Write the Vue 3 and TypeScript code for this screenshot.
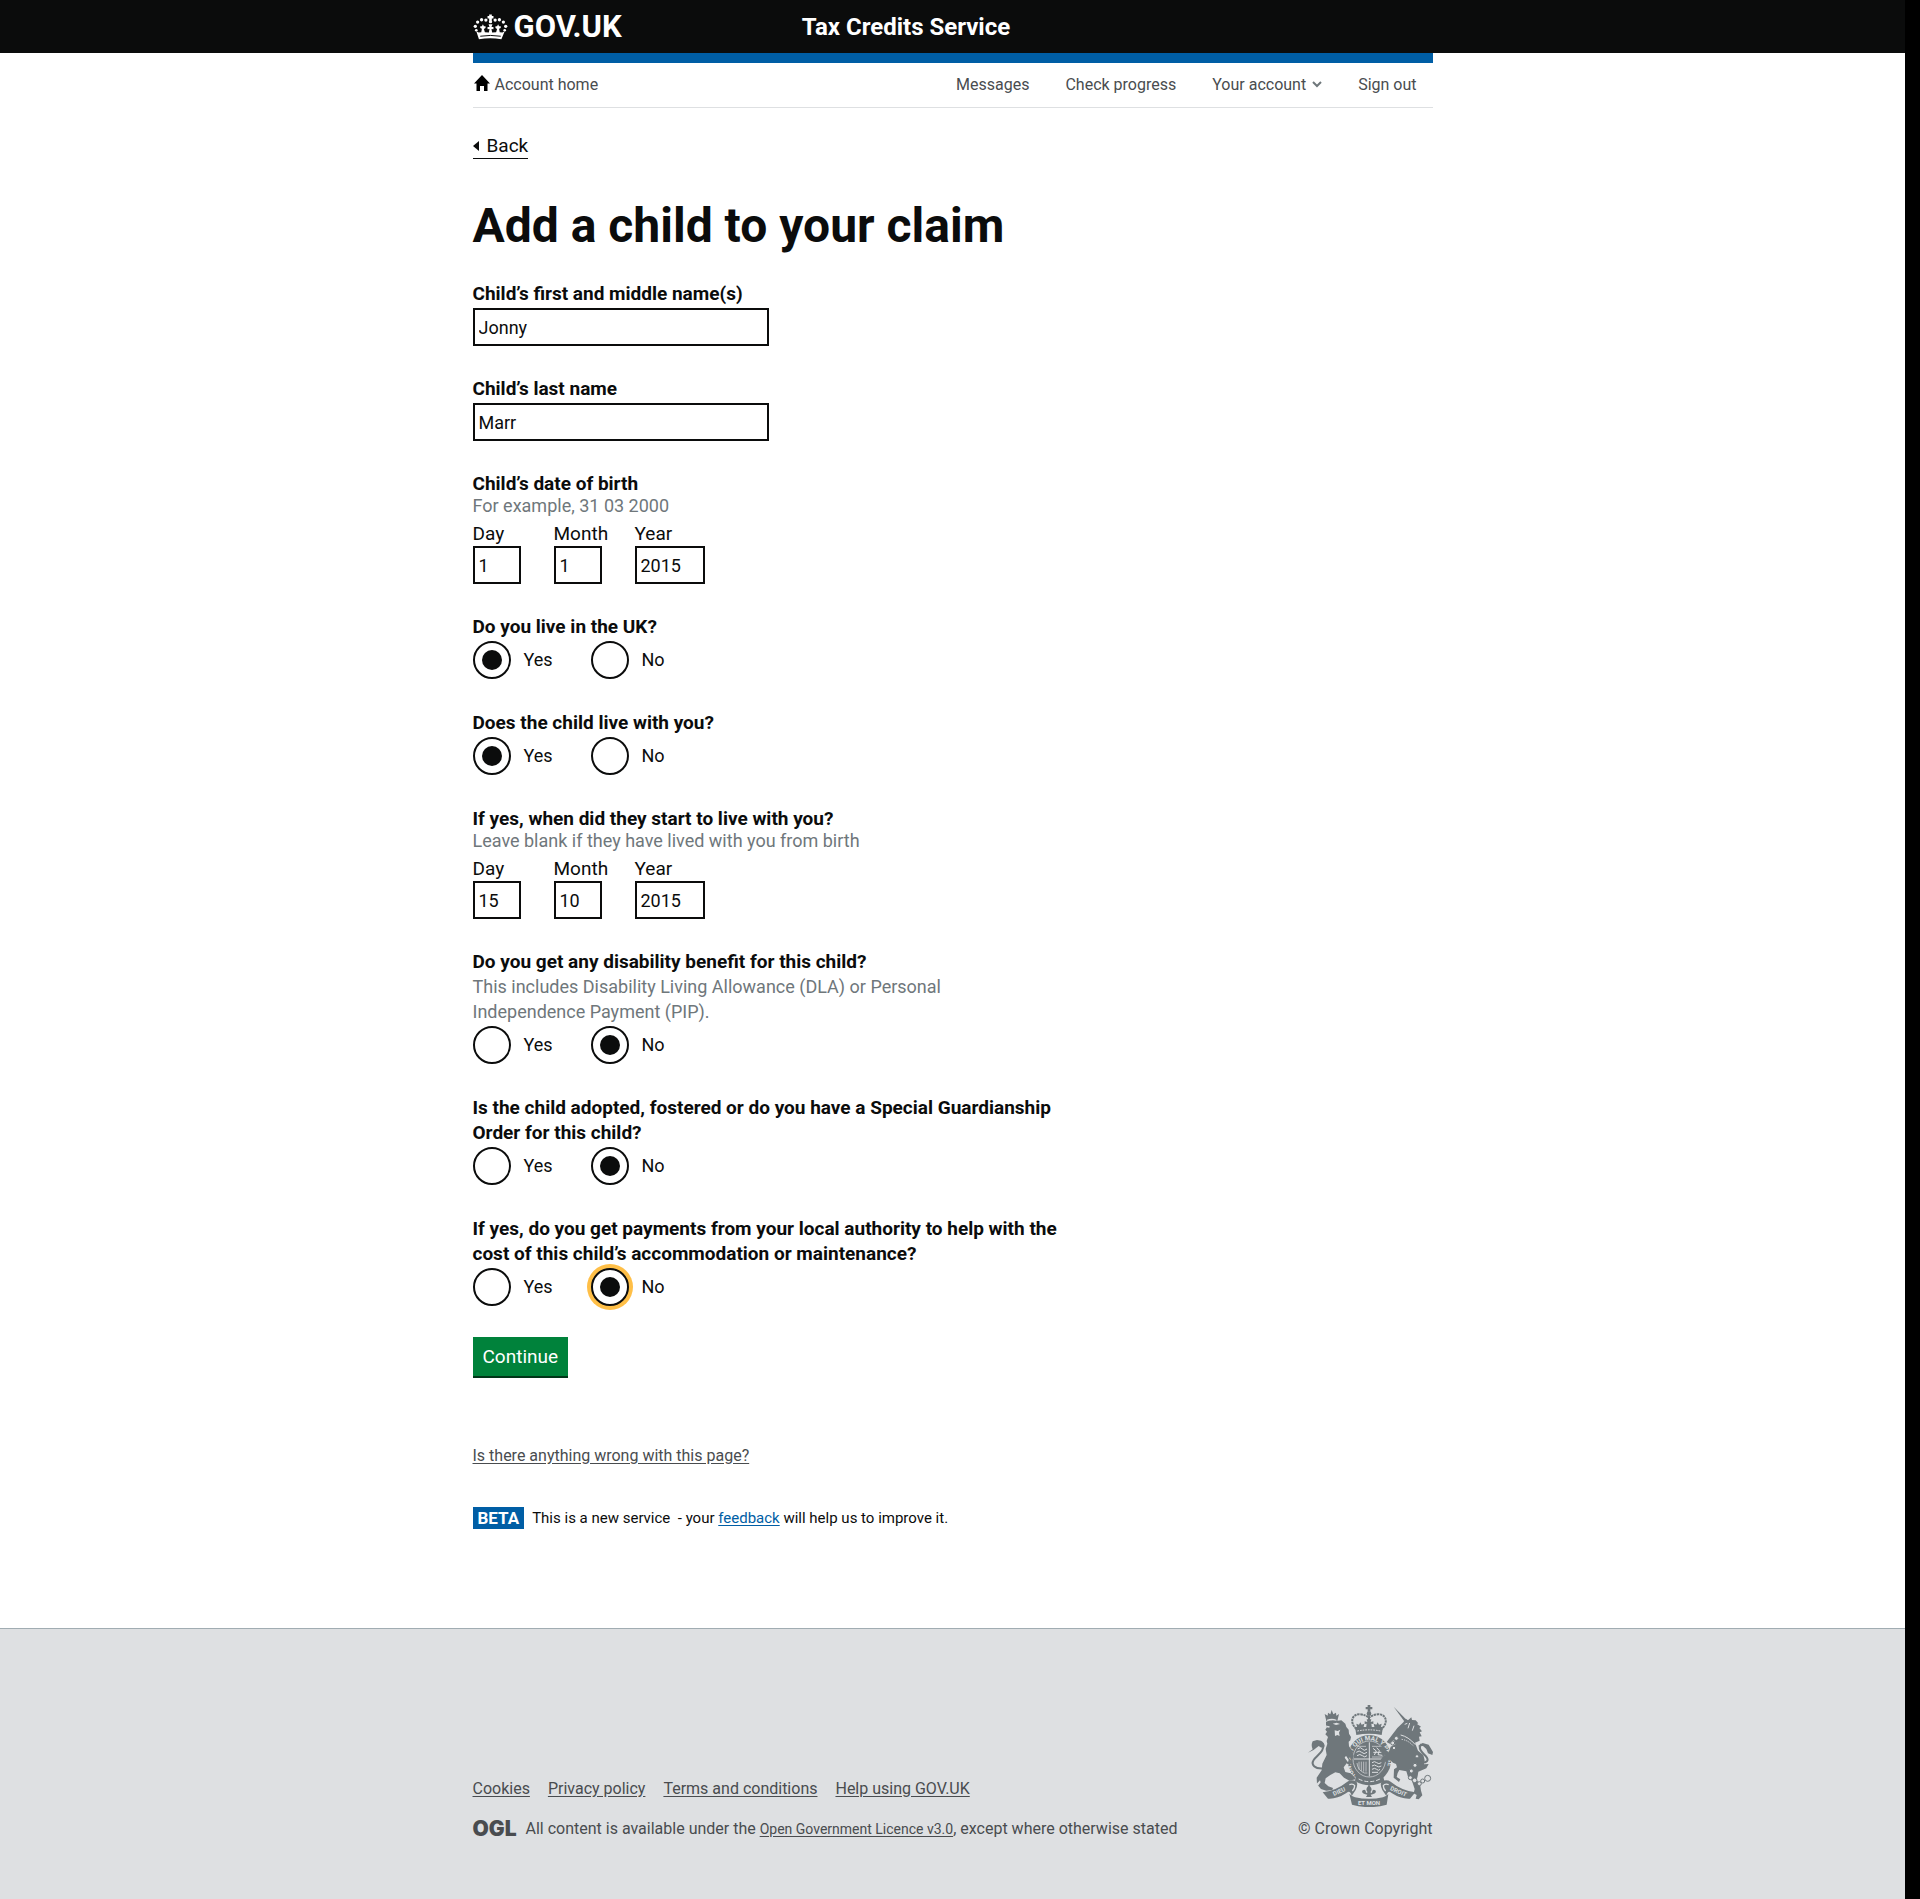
<script setup lang="ts">
import { reactive } from 'vue'

interface TextField { kind: 'text'; id: string; label: string }
interface DateField { kind: 'date'; id: string; label: string; hint: string }
interface ChoiceField { kind: 'choice'; id: string; label: string; hint?: string; active?: boolean }
type Field = TextField | DateField | ChoiceField

const fields: Field[] = [
  { kind: 'text', id: 'first', label: 'Child’s first and middle name(s)' },
  { kind: 'text', id: 'last', label: 'Child’s last name' },
  { kind: 'date', id: 'dob', label: 'Child’s date of birth', hint: 'For example, 31 03 2000' },
  { kind: 'choice', id: 'uk', label: 'Do you live in the UK?' },
  { kind: 'choice', id: 'home', label: 'Does the child live with you?' },
  { kind: 'date', id: 'since', label: 'If yes, when did they start to live with you?', hint: 'Leave blank if they have lived with you from birth' },
  { kind: 'choice', id: 'benefit', label: 'Do you get any disability benefit for this child?', hint: 'This includes Disability Living Allowance (DLA) or Personal Independence Payment (PIP).' },
  { kind: 'choice', id: 'adopted', label: 'Is the child adopted, fostered or do you have a Special Guardianship Order for this child?' },
  { kind: 'choice', id: 'payments', label: 'If yes, do you get payments from your local authority to help with the cost of this child’s accommodation or maintenance?', active: true },
]

const parts = ['Day', 'Month', 'Year']
const options = ['Yes', 'No']

const texts = reactive<Record<string, string>>({ first: 'Jonny', last: 'Marr' })
const dates = reactive<Record<string, Record<string, string>>>({
  dob: { Day: '1', Month: '1', Year: '2015' },
  since: { Day: '15', Month: '10', Year: '2015' },
})
const choices = reactive<Record<string, string>>({
  uk: 'Yes', home: 'Yes', benefit: 'No', adopted: 'No', payments: 'No',
})

const footerLinks = ['Cookies', 'Privacy policy', 'Terms and conditions', 'Help using GOV.UK']
</script>

<template>
  <div class="page">
    <header class="masthead">
      <div class="wrap masthead-row">
        <a class="brand" href="#">
          <svg class="crown" viewBox="24 24 106 78" aria-hidden="true">
            <g fill="#fff">
              <path d="M73 25h8v5h5v7h-5v7h-8v-7h-5v-7h5z" />
              <circle cx="77" cy="47" r="5" />
              <circle cx="63" cy="42" r="5" /><circle cx="91" cy="42" r="5" />
              <circle cx="50" cy="41" r="5" /><circle cx="104" cy="41" r="5" />
              <circle cx="38" cy="48" r="5" /><circle cx="116" cy="48" r="5" />
              <circle cx="31" cy="61" r="5" /><circle cx="123" cy="61" r="5" />
              <circle cx="34" cy="73" r="4" /><circle cx="120" cy="73" r="4" />
              <path d="M34 76l7 4 8-1 2-11-5-2v-5h5l3-6 3 6h5v5l-5 3 3 10 12 1 2-11-6 1v-7h6l-3-8h12l-3 8h6v7l-6-1 2 11 12-1 3-10-5-3v-5h5l3-6 3 6h5v5l-5 2 2 11 8 1 7-4-10 24q-34-6-68 0z" />
            </g>
            <path d="M46 91q31-5 62 0" fill="none" stroke="#0b0c0c" stroke-width="3" />
          </svg>
          <span>GOV.UK</span>
        </a>
        <a class="service" href="#">Tax Credits Service</a>
      </div>
    </header>

    <div class="wrap topbar">
      <nav class="nav" aria-label="Account">
        <a class="home" href="#">
          <svg width="18" height="18" viewBox="0 0 18 18" aria-hidden="true"><path d="M9 0l8 8.500h-2.500V16H11v-5H7v5H3.500V8.500H1z" /></svg>
          Account home
        </a>
        <a href="#">Messages</a>
        <a href="#">Check progress</a>
        <a class="account" href="#">
          Your account
          <svg width="10" height="16" viewBox="0 0 10 16" aria-hidden="true"><path d="M1 5l4 4 4-4" fill="none" stroke="#6f777b" stroke-width="2" /></svg>
        </a>
        <a href="#">Sign out</a>
      </nav>
    </div>

    <main class="wrap content">
      <a class="back" href="#"><i class="arrow"></i>Back</a>
      <h1>Add a child to your claim</h1>

      <form class="form" @submit.prevent>
        <template v-for="f in fields" :key="f.id">
          <div v-if="f.kind === 'text'" class="group">
            <label class="title" :for="f.id">{{ f.label }}</label>
            <input :id="f.id" v-model="texts[f.id]" class="box name" type="text" />
          </div>

          <div v-else-if="f.kind === 'date'" class="group date" role="group" :aria-labelledby="f.id">
            <span :id="f.id" class="title">{{ f.label }}</span>
            <span class="hint short">{{ f.hint }}</span>
            <div class="parts">
              <div v-for="p in parts" :key="p" class="part">
                <label :for="f.id + p">{{ p }}</label>
                <input :id="f.id + p" v-model="dates[f.id][p]" class="box" :class="p === 'Year' ? 'year' : 'small'" type="text" />
              </div>
            </div>
          </div>

          <div v-else class="group" role="radiogroup" :aria-labelledby="f.id">
            <div>
              <span :id="f.id" class="title">{{ f.label }}</span>
              <span v-if="f.hint" class="hint">{{ f.hint }}</span>
            </div>
            <div class="options">
              <label v-for="o in options" :key="o" class="option">
                <input v-model="choices[f.id]" type="radio" :name="f.id" :value="o" :class="{ ring: f.active && choices[f.id] === o }" />
                {{ o }}
              </label>
            </div>
          </div>
        </template>
        <button class="continue" type="submit">Continue</button>
      </form>

      <p class="report"><a href="#">Is there anything wrong with this page?</a></p>
      <p class="phase"><strong>BETA</strong><span>This is a new service&nbsp; - your <a href="#">feedback</a> will help us to improve it.</span></p>
    </main>

    <footer class="footer">
      <div class="wrap footer-row">
        <div>
          <nav class="footer-links" aria-label="Footer">
            <a v-for="l in footerLinks" :key="l" href="#">{{ l }}</a>
          </nav>
          <p class="licence">
            <b class="ogl">OGL</b>
            <span>All content is available under the <a href="#">Open Government Licence v3.0</a>, except where otherwise stated</span>
          </p>
        </div>
        <a class="copyright" href="#">
          <svg class="arms" viewBox="84 42 375 306" aria-hidden="true">
            <defs>
              <path id="garter" d="M231 258A56 63 0 1 1 305 258" />
            </defs>
            <!-- central crown -->
            <g fill="#6f777b">
              <path d="M263 42h8v6h6v7h-6v7h-8v-7h-6v-7h6z" />
              <circle cx="267" cy="68" r="7" />
              <path d="M225 108h84l-4 24q-38-7-76 0z" />
              <path d="M232 112l-3-14 8 3 4-7 4 7 8-3-3 14zM258 112l2-14-6 1v-8l8 2-2-8h14l-2 8 8-2v8l-6-1 2 14zM284 112l-3-14 8 3 4-7 4 7 8-3-3 14z" />
            </g>
            <g fill="none" stroke="#6f777b" stroke-width="6">
              <path d="M229 114C206 92 218 68 240 70C254 71 262 76 267 80C272 76 280 71 294 70C316 68 328 92 305 114" stroke-dasharray="7 2" />
              <path d="M267 76v20" />
            </g>
            <path d="M232 120q35-7 70 0" fill="none" stroke="#dee0e2" stroke-width="3" stroke-dasharray="5 3" />
            <!-- garter and shield -->
            <ellipse cx="268" cy="204" rx="66" ry="72" fill="#6f777b" />
            <ellipse cx="268" cy="204" rx="49" ry="54" fill="none" stroke="#dee0e2" stroke-width="2" />
            <text fill="#dee0e2" font-family="Roboto, sans-serif" font-size="19" font-weight="700"><textPath href="#garter">HONI SOIT QUI MAL Y PENSE</textPath></text>
            <g stroke="#dee0e2" fill="none" stroke-width="3">
              <path d="M268 154v102M222 204h93" />
              <path d="M233 174q9-8 14 0t14 0M229 184q9-8 16 0t16 0M231 194q9-7 16 0t14 0" />
              <path d="M232 166h26M276 166h24M276 198h34" stroke-width="2" />
              <path d="M279 172l10 8-6 12M290 170l8 9-4 12 13 2M280 184h24" />
              <path d="M237 212v24M244 212v28M251 212v30M258 212v30M231 216q2 22 22 30h9" stroke-width="2" />
              <path d="M276 215q8-6 14 0t14 0M276 225q8-6 14 0t14 0M276 235q8-6 14 0t10 0M276 244h18" />
            </g>
            <path d="M228 250l10 12q30 14 60 0l10-12 5 20q-44 26-88 0z" fill="#6f777b" />
            <path d="M236 264q32 16 64 0" fill="none" stroke="#dee0e2" stroke-width="3" stroke-dasharray="12 6" />
            <!-- lion -->
            <g fill="#6f777b">
              <path d="M139 90L134 69l9 5 1-9 7 5 4-13 5 13 8-5 1 9 8-5-5 21q-17-6-33 0z" />
              <path d="M138 92q16-6 36-3l10-1 12 10 3 10 7 8 1 12 6 10-2 10-5 4 1 14 10 14 4 16-3 8-8-6-5 2 8 8-2 16-11-7-9 12 5 14 16 4 12 12 2 6-18 4-16-9-13-13-13-3-15 8-14 10-3 14 11 10 14 5-2 6-18 2-16-5-12-14-1-20 15-22 2-20 13-26-3-18 5-16-2-8 4-12-8-8 5-8-5-6 5-8-3-7z" />
              <path d="M84 185l14-10q-6-13 0-24l13-4 12 2q10 5 11 17l-10 4-8-5q-12 12-32 20z" />
            </g>
            <path d="M130 232C104 234 92 221 101 207C111 193 136 180 129 158" fill="none" stroke="#6f777b" stroke-width="6" />
            <g fill="#dee0e2"><path d="M141 86q15-5 28 0v3q-14-4-27 1zM158 98l12-3 10 4-12 3zM164 118l9 2 8-4-4 9 2 10-7-3-7 3zM140 104l9 2-1 4-8-1zM120 268l-10 10 3 8 9-12zM198 194l8 12-2 8-10-14z" /></g>
            <!-- unicorn -->
            <g fill="#6f777b">
              <path d="M341 47l42 43-7 5z" />
              <path d="M352 111l18-17 7-11 7 5 10-9 2 8 11 1 8 9-4 2 12 8-5 4 8 10-7 3 6 12-8 1 2 12-14 6 9 24 16 13 4 16-2 12 14-1-7 13-24 10-2 13-3 12 10 12 3 20 4 14-11 12-9-2 3-11-9-5 3-13-8-24-12-13-5-16-21-4-5 9-3 12 11 7-4 8-16-13 1-25 9-6-3-10-9-4-10-9-12 7-15-7 6-8 8-4-8-8-6-9 1-10 12 2 2 7 9 9 6-18 14-7-4-12-6 2-7 8-9-5z" />
              <path d="M413 166l15-10 18 5 13 22-2 9-13-5-5-13-10-9z" />
            </g>
            <path d="M413 213C444 219 448 207 437 195C421 179 413 169 425 159" fill="none" stroke="#6f777b" stroke-width="6" />
            <path d="M362 132q23 5 44 29" fill="none" stroke="#dee0e2" stroke-width="3" />
            <path d="M365 145q21 3 36 21" fill="none" stroke="#dee0e2" stroke-width="3" stroke-dasharray="4 3" />
            <path d="M374 100l8-3M389 96l-5 16M402 104l-5 15" stroke="#dee0e2" stroke-width="3" />
            <g fill="#dee0e2" stroke="#6f777b" stroke-width="3">
              <circle cx="349" cy="142" r="6" /><circle cx="338" cy="156" r="6" /><circle cx="342" cy="171" r="5" />
              <circle cx="411" cy="196" r="5" /><circle cx="405" cy="223" r="6" /><circle cx="394" cy="240" r="6" />
              <circle cx="391" cy="260" r="6" /><circle cx="404" cy="268" r="7" /><circle cx="418" cy="278" r="6" /><circle cx="428" cy="270" r="6" /><circle cx="443" cy="262" r="9" />
            </g>
            <!-- motto ribbon -->
            <g fill="#6f777b">
              <path d="M128 304q42-6 74-32 12-8 26-1 8 7-1 26l-12 18q-5-20-17-8-28 18-54 16z" />
              <path d="M406 304q-42-6-74-32-12-8-26-1-8 7 1 26l12 18q5-20 17-8 28 18 54 16z" />
              <path d="M208 308q10 10 17 11 42 9 84 0 8-2 16-10l-5 32q-52 15-104 0z" />
              <path d="M264 286l3-8 3 8q9 9 1 18l5 2q1-14 10-8 6 8-8 12l-6 1 4 7h-18l4-7-6-1q-14-4-8-12 9-6 10 8l5-2q-8-9 1-18z" />
            </g>
            <path d="M208 281q11-4 16 3 0 9-7 16M326 281q-11-4-16 3 0 9 7 16" fill="none" stroke="#dee0e2" stroke-width="4" />
            <g fill="#dee0e2" font-family="Roboto, sans-serif" font-size="18" font-weight="700" text-anchor="middle">
              <text transform="translate(180 307) rotate(-24)">DIEU</text>
              <text x="267" y="341">ET MON</text>
              <text transform="translate(353 307) rotate(24)">DROIT</text>
            </g>
          </svg>
          © Crown Copyright
        </a>
      </div>
    </footer>
  </div>
</template>

<style>
body { margin: 0; }
</style>

<style scoped>
.page {
  min-height: 100vh;
  box-sizing: border-box;
  display: flex;
  flex-direction: column;
  border-right: 15px solid #000;
  background: #fff;
  color: #0b0c0c;
  font: 19px/25px Roboto, "Liberation Sans", sans-serif;
}
.page * { box-sizing: border-box; }
a { color: inherit; }
p, h1 { margin: 0; }
.wrap { width: 100%; max-width: 960px; margin: 0 auto; }

.masthead { background: #0b0c0c; color: #fff; font-weight: 700; }
.masthead a { text-decoration: none; }
.masthead-row { display: grid; grid-template-columns: 1fr 2fr; gap: 14px; align-items: center; height: 53px; }
.brand { display: flex; align-items: center; gap: 6px; font-size: 31px; line-height: 30px; }
.crown { width: 35px; height: 26px; }
.service { font-size: 24px; line-height: 30px; }

.topbar { border-top: 10px solid #005ea5; border-bottom: 1px solid #dee0e2; }
.nav { display: flex; align-items: center; gap: 36px; height: 44px; padding-right: 16px; font-size: 16px; line-height: 20px; color: #494c4f; }
.nav a { text-decoration: none; }
.home { display: flex; align-items: flex-start; gap: 4px; margin-right: auto; }
.home svg { fill: #000; }
.account { display: flex; align-items: center; gap: 6px; }

.content { display: flex; flex-direction: column; align-items: flex-start; padding: 25px 0 99px; }
.back { display: flex; align-items: center; border-bottom: 1px solid #0b0c0c; text-decoration: none; }
.arrow { width: 0; height: 0; margin-right: 8px; border: 5px solid transparent; border-left: 0; border-right: 6px solid #0b0c0c; }
h1 { margin: 42px 0 30px; font-size: 48px; line-height: 50px; font-weight: 700; }

.form { display: flex; flex-direction: column; align-items: flex-start; gap: 30px; max-width: 590px; }
.group { display: flex; flex-direction: column; gap: 2px; }
.date { gap: 0; }
.title { display: block; font-weight: 700; }
.hint { display: block; max-width: 480px; font-size: 18px; color: #6f777b; }
.short { margin-bottom: 5px; line-height: 20px; }
.box { height: 38px; padding: 4px; border: 2px solid #0b0c0c; border-radius: 0; background: #fff; color: #0b0c0c; font: inherit; font-size: 18px; }
.name { width: 296px; }
.parts { display: flex; gap: 30px; }
.part { display: flex; flex-direction: column; width: 51px; }
.part:last-child { width: 70px; }
.small { width: 48px; }
.year { width: 70px; }
.options { display: flex; height: 39px; }
.option { display: flex; align-items: flex-start; gap: 13px; min-width: 118px; font-size: 18px; line-height: 38px; }
.option input {
  appearance: none;
  display: grid;
  place-items: center;
  width: 38px;
  height: 38px;
  margin: 0;
  border: 2px solid #0b0c0c;
  border-radius: 50%;
  background: #fff;
  outline: none;
}
.option input:checked::before { content: ""; width: 20px; height: 20px; border-radius: 50%; background: #0b0c0c; }
.option input.ring, .option input:focus-visible { box-shadow: 0 0 0 4px #ffbf47; }
.continue { height: 39px; padding: 0 10px; border: 0; background: #00823b; box-shadow: 0 2px 0 #003618; color: #fff; font: inherit; }

.report { margin-top: 70px; font-size: 16px; line-height: 20px; color: #494c4f; }
.phase { display: flex; align-items: center; gap: 8px; margin-top: 41px; font-size: 15px; line-height: 22px; }
.phase strong { padding: 0 5px; background: #005ea5; color: #fff; font-size: 17px; }
.phase a { color: #005ea5; }
.report a, .phase a, .footer-links a, .licence a { text-underline-offset: 2px; }

.footer { flex: 1; border-top: 1px solid #a1acb2; background: #dee0e2; color: #494c4f; font-size: 16px; line-height: 20px; }
.footer-row { display: flex; align-items: flex-end; justify-content: space-between; padding: 76px 0 60px; }
.footer-links { display: flex; gap: 18px; margin-bottom: 20px; }
.licence { display: flex; align-items: center; gap: 10px; }
.licence a { font-size: 14px; }
.ogl { width: 43px; font-family: Inter, sans-serif; font-size: 21px; font-weight: 900; }
.copyright { display: flex; flex-direction: column; align-items: flex-end; gap: 12px; text-decoration: none; }
.arms { width: 125px; height: 102px; }
</style>
